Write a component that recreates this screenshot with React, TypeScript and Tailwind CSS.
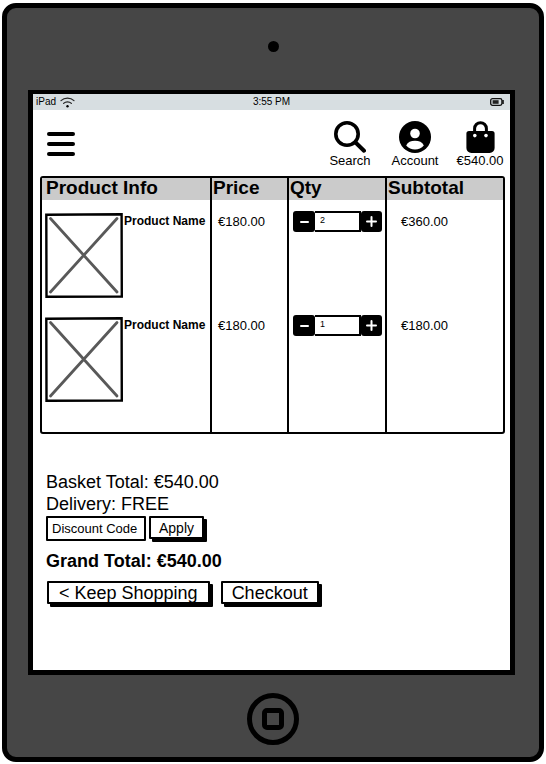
import React from "react";

type Item = { id: number; name: string; price: string; qty: number; subtotal: string };

const items: Item[] = [
  { id: 1, name: "Product Name", price: "€180.00", qty: 2, subtotal: "€360.00" },
  { id: 2, name: "Product Name", price: "€180.00", qty: 1, subtotal: "€180.00" },
];

function WifiIcon() {
  return (
    <svg width="15" height="11" viewBox="0 0 15 11" fill="none" stroke="#222" strokeLinecap="round" aria-hidden="true">
      <path d="M1 3.6C4.6 0.3 10.4 0.3 14 3.6" strokeWidth="1.2" />
      <path d="M3.6 6.4C5.8 4.3 9.2 4.3 11.4 6.4" strokeWidth="1.2" />
      <circle cx="7.5" cy="9.2" r="1.2" fill="#000" stroke="none" />
    </svg>
  );
}

function BatteryIcon() {
  return (
    <svg width="14" height="8" viewBox="0 0 14 8" aria-hidden="true">
      <rect x="0.7" y="0.7" width="11.2" height="6.6" rx="1.8" fill="none" stroke="#111" strokeWidth="1.3" />
      <rect x="2.6" y="2.2" width="6" height="3.6" fill="#222" />
      <path d="M13 2v4" stroke="#111" strokeWidth="1.6" />
    </svg>
  );
}

function SearchIcon() {
  return (
    <svg width="32" height="32" viewBox="0 0 32 32" fill="none" stroke="#000" aria-hidden="true">
      <circle cx="13" cy="13" r="11.2" strokeWidth="3.6" />
      <path d="M21.3 21.3L30 29.7" strokeWidth="4" strokeLinecap="round" />
    </svg>
  );
}

function AccountIcon() {
  return (
    <svg width="32" height="32" viewBox="0 0 32 32" aria-hidden="true">
      <circle cx="16" cy="16" r="16" />
      <circle cx="16" cy="12.5" r="4.8" fill="#fff" />
      <path d="M7.2 24.4C8.6 21.2 12 19.8 16 19.8s7.4 1.4 8.8 4.6C22.6 27 19.4 28.4 16 28.4S9.4 27 7.2 24.4z" fill="#fff" />
    </svg>
  );
}

function BagIcon() {
  return (
    <svg width="29" height="32" viewBox="0 0 29 32" aria-hidden="true">
      <path d="M8.6 13V7.6a5.9 5.9 0 0 1 11.8 0V13" fill="none" stroke="#000" strokeWidth="3" />
      <path d="M3 10h23a2.6 2.6 0 0 1 2.6 2.6V27a5 5 0 0 1-5 5H5.4a5 5 0 0 1-5-5V12.6A2.6 2.6 0 0 1 3 10z" />
      <circle cx="8.8" cy="14.6" r="1.8" fill="#fff" />
      <circle cx="20" cy="14.6" r="1.8" fill="#fff" />
    </svg>
  );
}

function ImagePlaceholder() {
  return (
    <svg width="78" height="85" viewBox="0 0 78 85" className="shrink-0" role="img" aria-label="Product">
      <path d="M5.5 5.5L72 79M72 5.5L5.5 79" stroke="#595959" strokeWidth="2.8" strokeLinecap="round" />
      <path d="M1.3 1.8L76.6 1.2L76.8 83.6L1.5 83.8z" fill="none" stroke="#000" strokeWidth="2.4" />
    </svg>
  );
}

function Stepper({ item }: { item: Item }) {
  return (
    <div className="flex h-[21px]">
      <button type="button" aria-label="Decrease quantity" className="flex w-[22px] shrink-0 items-center justify-center rounded-[3px] bg-black">
        <span className="h-[2px] w-[9px] rounded-sm bg-white" />
      </button>
      <input
        type="text"
        aria-label="Quantity"
        defaultValue={item.qty}
        className="w-[46px] min-w-0 border-y-2 border-r-2 border-black bg-white pb-1 pl-[5px] text-[9px] leading-3"
      />
      <button type="button" aria-label="Increase quantity" className="flex w-[21px] shrink-0 items-center justify-center rounded-[3px] bg-black">
        <svg width="11" height="11" viewBox="0 0 11 11" stroke="#fff" strokeWidth="2" strokeLinecap="round" aria-hidden="true">
          <path d="M1 5.5h9M5.5 1v9" />
        </svg>
      </button>
    </div>
  );
}

function NavItem({ label, children }: { label: string; children: React.ReactNode }) {
  return (
    <a href="#" className="flex w-[50px] flex-col items-center text-[13px] leading-4 whitespace-nowrap">
      {children}
      {label}
    </a>
  );
}

const headCell = "border-r-2 border-black p-0 pl-px align-top last:border-r-0";
const bodyCell = "border-r-2 border-black p-0 align-top last:border-r-0";
const sketchButton = "rounded-[1px] border-2 border-black bg-white shadow-[3px_3px_0_#000]";

export default function App() {
  return (
    <div className="flex min-h-screen flex-col bg-white px-[2px] pt-[3px] pb-[2px] font-['Liberation_Sans',Arial,sans-serif] text-black">
      <div className="flex flex-1 flex-col rounded-[14px] border-[5px] border-black bg-[#464646]">
        <div className="flex h-[82px] items-center justify-center pb-[6px]">
          <div className="size-[11px] rounded-full bg-black" />
        </div>

        <div className="mr-6 ml-[21px] flex flex-1 flex-col border-[5px] border-t-4 border-black bg-white">
          <div className="grid h-4 grid-cols-3 items-center bg-[#d7dee1] px-[3px] text-[10px] leading-3">
            <span className="flex items-center gap-1">
              iPad <WifiIcon />
            </span>
            <span className="text-center">3:55 PM</span>
            <span className="flex justify-end pr-[3px]">
              <BatteryIcon />
            </span>
          </div>

          <header className="flex items-start justify-between pt-[11px] pr-[5px] pb-[7px] pl-[14px]">
            <button type="button" aria-label="Menu" className="mt-[11px] flex w-7 flex-col gap-[6px]">
              <span className="h-1 rounded-full bg-black" />
              <span className="h-1 rounded-full bg-black" />
              <span className="h-1 rounded-full bg-black" />
            </button>
            <nav className="flex gap-[15px]">
              <NavItem label="Search">
                <SearchIcon />
              </NavItem>
              <NavItem label="Account">
                <AccountIcon />
              </NavItem>
              <NavItem label="€540.00">
                <BagIcon />
              </NavItem>
            </nav>
          </header>

          <div className="mr-[5px] ml-[7px] rounded-[3px] border-2 border-black">
            <table className="w-full table-fixed border-separate border-spacing-0">
              <colgroup>
                <col className="w-[170px]" />
                <col className="w-[77px]" />
                <col className="w-[98px]" />
                <col />
              </colgroup>
              <thead>
                <tr className="h-[22px] bg-[#cbcbcb] text-left text-[19px] leading-5">
                  <th className="border-r-2 border-black p-0 pl-1 align-top">Product Info</th>
                  <th className={headCell}>Price</th>
                  <th className={headCell}>Qty</th>
                  <th className={headCell}>Subtotal</th>
                </tr>
              </thead>
              <tbody className="text-[13px] leading-4">
                {items.map((item) => (
                  <tr key={item.id} className="h-[104px] last:h-[128px]">
                    <td className={bodyCell}>
                      <div className="flex pt-[13px] pl-[3px] font-bold whitespace-nowrap">
                        <ImagePlaceholder />
                        <span className="pl-px text-[12px]">{item.name}</span>
                      </div>
                    </td>
                    <td className={bodyCell}>
                      <div className="pt-[14px] pl-[6px]">{item.price}</div>
                    </td>
                    <td className={bodyCell}>
                      <div className="pt-[11px] pl-1">
                        <Stepper item={item} />
                      </div>
                    </td>
                    <td className={bodyCell}>
                      <div className="pt-[14px] pl-[14px]">{item.subtotal}</div>
                    </td>
                  </tr>
                ))}
              </tbody>
            </table>
          </div>

          <section className="px-[13px] pt-[37px] text-[18px] leading-[22px]">
            <p>Basket Total: €540.00</p>
            <p>Delivery: FREE</p>
            <form className="mt-px flex gap-[3px]" onSubmit={(e) => e.preventDefault()}>
              <input
                type="text"
                aria-label="Discount Code"
                placeholder="Discount Code"
                className="h-[25px] w-[100px] rounded-[1px] border-2 border-black px-1 text-[13px] leading-4 placeholder:text-black placeholder:opacity-100"
              />
              <button type="submit" className={`${sketchButton} h-[23px] px-2 text-[14px] leading-4`}>
                Apply
              </button>
            </form>
            <p className="mt-[9px] font-bold">Grand Total: €540.00</p>
            <div className="mt-[9px] ml-px flex gap-[11px]">
              <button type="button" className={`${sketchButton} h-[23px] px-[10px] leading-[18px]`}>
                &lt; Keep Shopping
              </button>
              <button type="button" className={`${sketchButton} h-[23px] px-[9px] leading-[18px]`}>
                Checkout
              </button>
            </div>
          </section>
        </div>

        <div className="flex h-[82px] items-center justify-center pt-[6px]">
          <button type="button" aria-label="Home" className="flex size-[52px] items-center justify-center rounded-full border-[5px] border-black">
            <span className="size-[22px] rounded-[5px] border-[5px] border-black" />
          </button>
        </div>
      </div>
    </div>
  );
}
